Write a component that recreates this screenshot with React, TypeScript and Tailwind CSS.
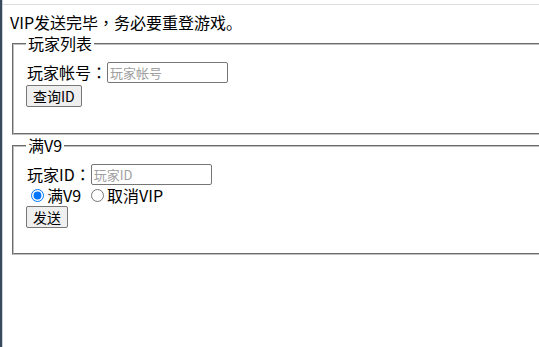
import { useState } from 'react'

const font = { fontFamily: '"Noto Sans CJK SC", "Noto Sans", sans-serif' }
const centered = { fontFamily: '"Noto Sans CJK TC", "Noto Sans", sans-serif' }

export default function App() {
  const [mode, setMode] = useState('v9')

  return (
    <div
      className="flex h-[347px] w-[539px] overflow-hidden bg-white text-[16px] leading-[21px] text-black"
      style={font}
    >
      {/* frame edge */}
      <div className="w-[2px] shrink-0 bg-[#3a4a5c]" />
      <div className="w-[1px] shrink-0 bg-[#c9d2dc]" />

      <div className="flex min-w-0 flex-1 flex-col pt-[4px]">
        <div className="flex flex-1 flex-col border-t border-[#dddddd] pl-[7px] pt-[7px]">
          <div>
            VIP发送完毕<span style={centered}>，</span>务必要重登游戏。
          </div>

          <fieldset className="mx-[2px] w-[600px] border-2 border-[#c0c0c0] px-[12px] pb-[26px] pt-[8px] [border-style:groove]">
            <legend className="px-[2px]">玩家列表</legend>
            <div className="flex items-center">
              <span className="pl-[1px]">
                玩家帐号<span style={centered}>：</span>
              </span>
              <input
                className="h-[21px] w-[121px] rounded-[2px] border border-[#767676] px-[2px] text-[13px] placeholder:text-[#a0a0a0]"
                placeholder="玩家帐号"
              />
            </div>
            <button className="mt-[2px] h-[22px] rounded-[2px] border border-[#767676] bg-[#efefef] px-[6px] text-[14px] leading-[18px]">
              查询ID
            </button>
          </fieldset>

          <fieldset className="mx-[2px] w-[600px] border-2 border-[#c0c0c0] px-[12px] pb-[25px] pt-[8px] [border-style:groove]">
            <legend className="px-[2px]">满V9</legend>
            <div className="flex items-center">
              <span className="pl-[1px]">
                玩家ID<span style={centered}>：</span>
              </span>
              <input
                className="h-[21px] w-[121px] rounded-[2px] border border-[#767676] px-[2px] text-[13px] placeholder:text-[#a0a0a0]"
                placeholder="玩家ID"
              />
            </div>
            <div className="flex items-center">
              <label className="flex items-center">
                <input
                  type="radio"
                  name="vip"
                  className="mb-[1px] ml-[5px] mr-[3px] h-[13px] w-[13px]"
                  checked={mode === 'v9'}
                  onChange={() => setMode('v9')}
                />
                满V9
              </label>
              <label className="ml-[5px] flex items-center">
                <input
                  type="radio"
                  name="vip"
                  className="mb-[1px] ml-[5px] mr-[3px] h-[13px] w-[13px]"
                  checked={mode === 'cancel'}
                  onChange={() => setMode('cancel')}
                />
                取消VIP
              </label>
            </div>
            <button className="h-[22px] rounded-[2px] border border-[#767676] bg-[#efefef] px-[6px] text-[14px] leading-[18px]">
              发送
            </button>
          </fieldset>
        </div>
      </div>
    </div>
  )
}
